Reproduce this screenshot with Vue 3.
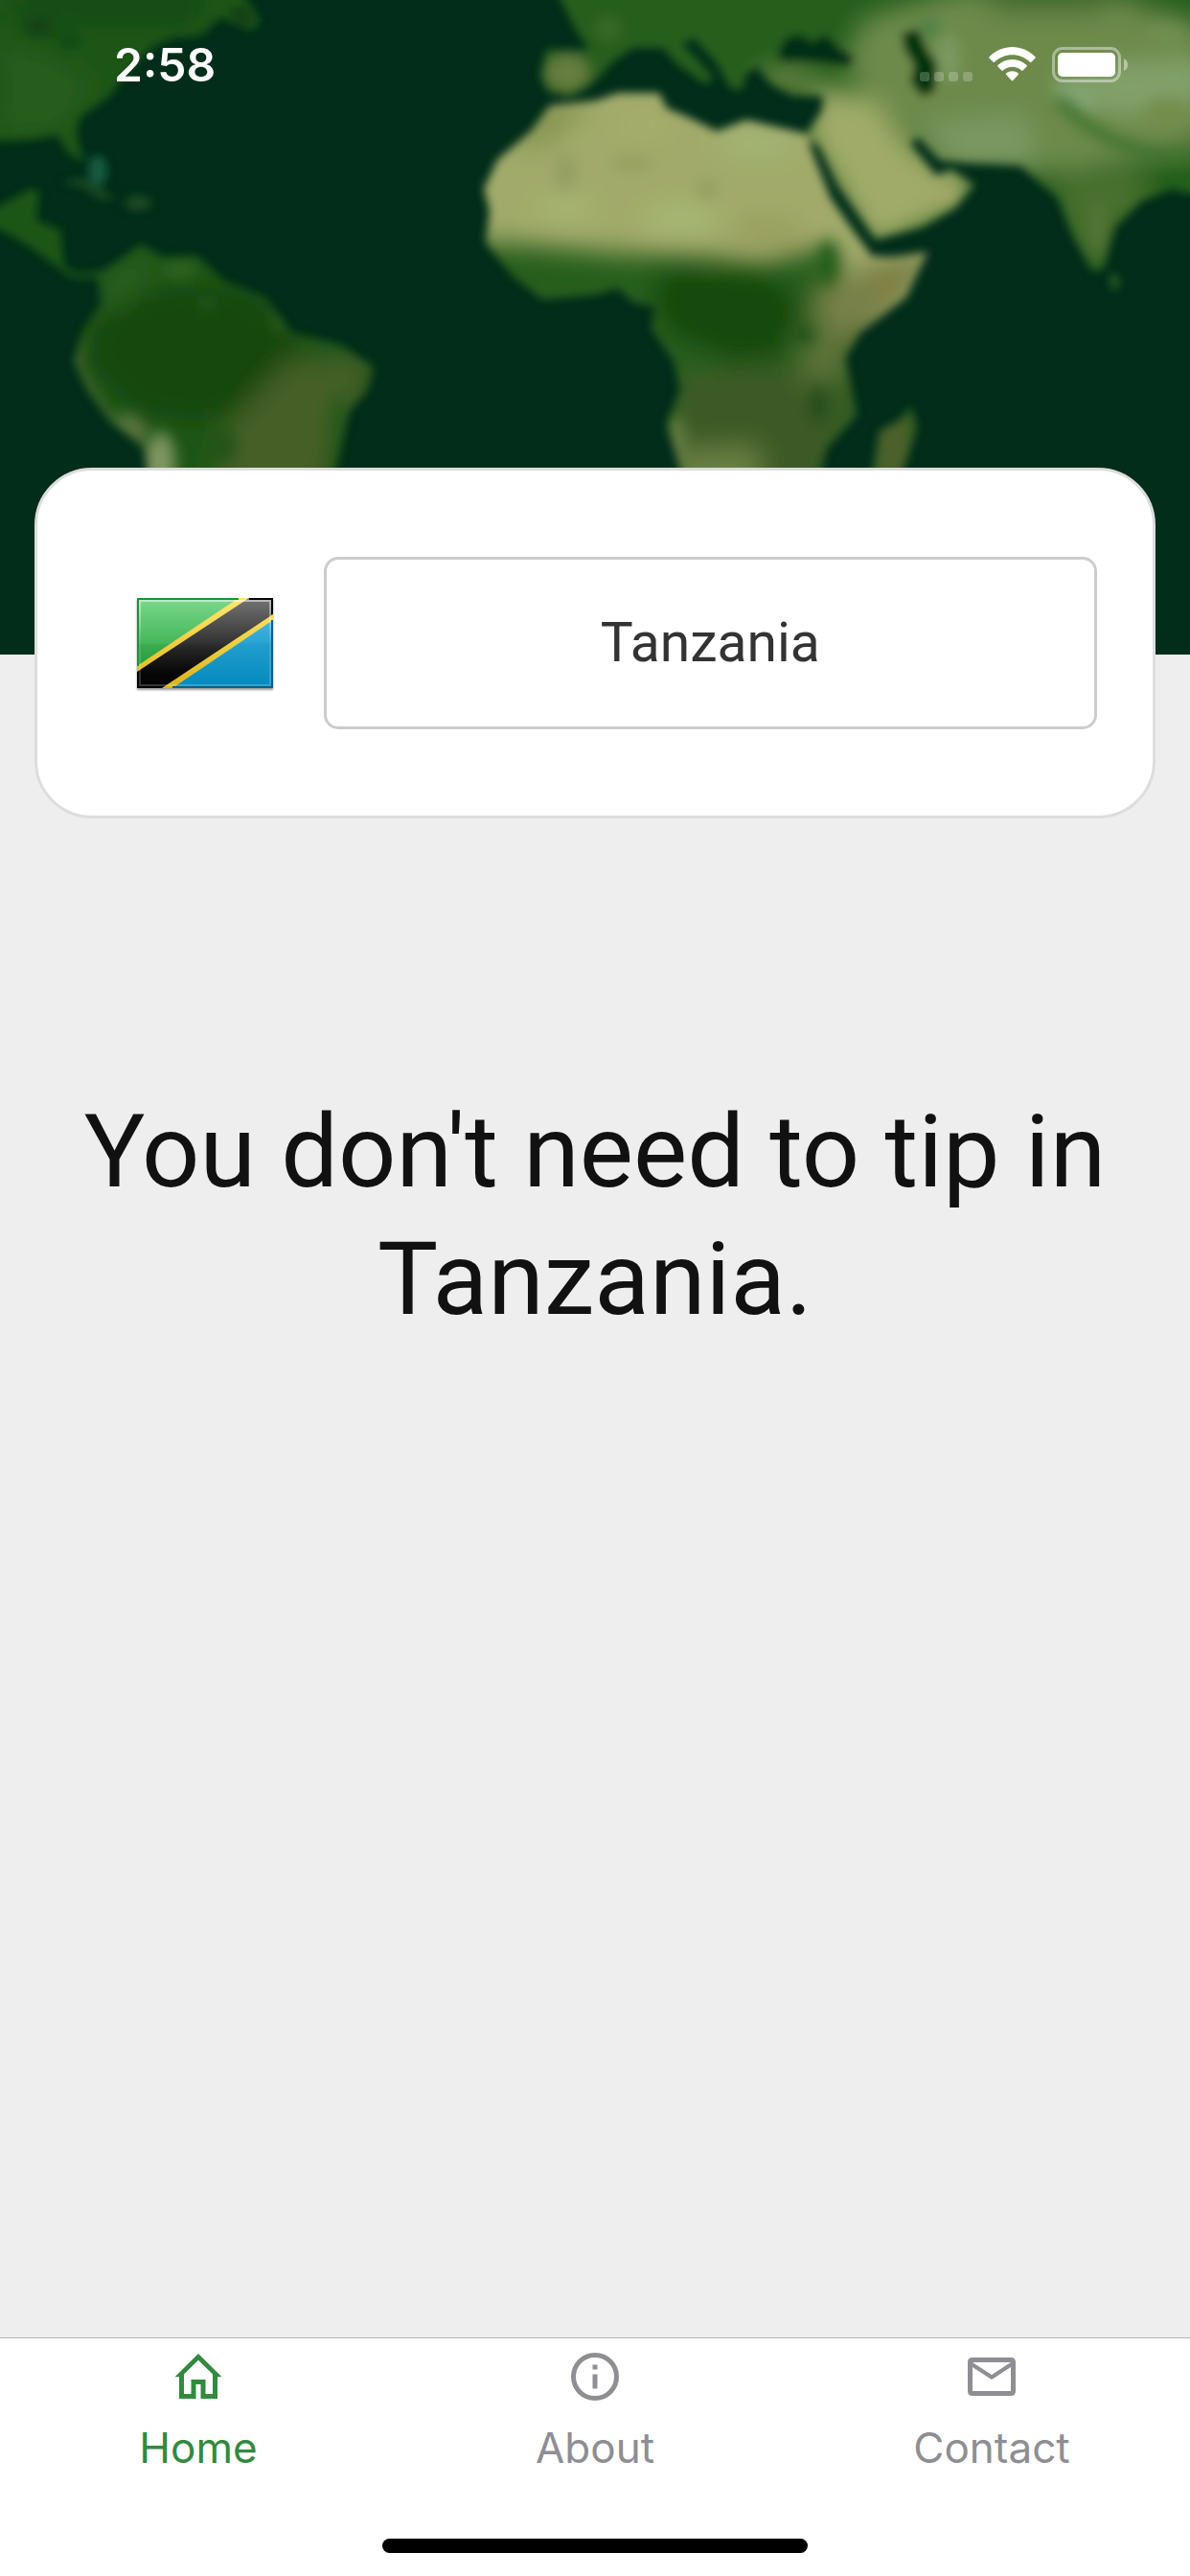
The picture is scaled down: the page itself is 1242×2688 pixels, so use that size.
<script setup>
import { ref } from 'vue'

const country = ref('Tanzania')
const active = ref('home')
const tabs = [
  { id: 'home', label: 'Home' },
  { id: 'about', label: 'About' },
  { id: 'contact', label: 'Contact' }
]
</script>

<template>
  <div class="screen">
    <header class="hero">
      <svg class="map" viewBox="0 0 1242 683" preserveAspectRatio="xMidYMin slice" aria-hidden="true">
        <defs>
          <filter id="soft" x="-5%" y="-5%" width="110%" height="110%"><feGaussianBlur stdDeviation="5" /></filter>
          <filter id="wide" x="-50%" y="-50%" width="200%" height="200%"><feGaussianBlur stdDeviation="13" /></filter>
          <filter id="patch" x="-50%" y="-50%" width="200%" height="200%"><feGaussianBlur stdDeviation="6" /></filter>
          <clipPath id="americas">
            <path d="M-20-20H245L272 22 262 32 230 18 210 38 180 40 158 50 132 76 115 100 83 123 80 140 88 170 71 160 60 141 30 146-20 148Z" />
            <path d="M-10 220 32 197 41 200 38 230 63 240 67 277 79 285 107 283 147 255 170 268 206 267 234 293 277 310 305 347 356 360 390 383 384 407 364 430 356 467 345 510H156L150 467 115 440 91 407 77 377 87 343 105 317 102 290 75 290 44 267 20 250-10 235Z" />
          </clipPath>
          <clipPath id="africa">
            <path d="M622 105 574 110 554 137 519 167 505 197 511 220 507 253 535 287 566 312 622 307 645 300 661 315 684 320 680 343 704 377 710 407 696 443 716 510H852L863 467 894 433 882 373 898 347 946 310 968 263 930 268 910 267 890 240 867 207 847 157 843 140 779 125 748 137 720 123 696 113 688 97 645 97Z" />
            <path d="M950 425 957 445 946 480 935 510H908L918 450 940 438Z" />
          </clipPath>
          <clipPath id="eurasia">
            <path d="M575-20 602 33 615 52 570 52 564 80 572 96 594 101 612 92 626 80 640 64 661 50 692 50 706 66 736 88 745 82 728 62 712 46 724 40 748 66 762 92 775 94 778 78 790 70 805 88 827 100 859 100 858 115 840 142 855 153 874 193 914 250 962 237 997 217 1017 193 993 177 977 183 950 150 958 143 981 167 1009 170 1065 173 1104 207 1120 247 1140 283 1152 280 1164 237 1191 210 1223 197 1262 207V-20Z" />
            <path d="M1160 284 1169 290 1166 304 1158 298Z" />
          </clipPath>
        </defs>
        <rect width="1242" height="683" fill="#012d1a" />
        <g filter="url(#soft)">
          <g clip-path="url(#americas)">
            <rect x="-20" y="-20" width="420" height="540" fill="#1e5617" />
            <g filter="url(#wide)">
              <path d="M0-20H220L210 30 90 30 0 10Z" fill="#174d12" />
              <path d="M0 40 60 60 100 90 60 140 0 140Z" fill="#265c1c" />
              <path d="M170 300 260 300 320 360 290 400 270 430 200 440 140 430 90 380 100 330Z" fill="#13460f" />
              <path d="M300 375 390 370 370 430 330 520 225 520 230 450Z" fill="#445e28" />
              <path d="M120 280 170 265 130 320 105 330Z" fill="#2a5f20" />
            </g>
            <g filter="url(#patch)">
              <path d="M80 350 76 380 104 430 150 470 152 510" fill="none" stroke="#4c6a34" stroke-width="12" />
              <ellipse cx="168" cy="485" rx="14" ry="34" fill="#7f9860" />
              <ellipse cx="140" cy="444" rx="18" ry="8" fill="#5d7840" transform="rotate(38 140 444)" />
              <ellipse cx="188" cy="282" rx="18" ry="9" fill="#306323" />
              <ellipse cx="216" cy="318" rx="9" ry="8" fill="#1f5819" />
              <ellipse cx="291" cy="336" rx="6" ry="11" fill="#335d1f" />
              <ellipse cx="232" cy="465" rx="14" ry="16" fill="#215319" />
              <ellipse cx="352" cy="450" rx="10" ry="40" fill="#265a1c" />
              <ellipse cx="40" cy="28" rx="16" ry="9" fill="#0e3b12" />
              <ellipse cx="72" cy="43" rx="10" ry="7" fill="#0e4213" />
            </g>
          </g>
          <path d="M236 8 256 6 266 24 250 26Z" fill="#163f18" />
          <ellipse cx="102" cy="178" rx="10" ry="16" fill="#145a40" />
          <path d="M62 190 86 186 104 196 122 208 104 208 88 196Z" fill="#1a4a20" />
          <ellipse cx="144" cy="212" rx="14" ry="8" fill="#1d4a20" />

          <g clip-path="url(#africa)">
            <rect x="500" y="90" width="480" height="430" fill="#a1aa6a" />
            <g filter="url(#wide)">
              <path d="M440 250 560 256 640 264 720 266 800 274 836 262 870 262 876 300 890 330 990 380 990 560H440Z" fill="#265f1d" />
              <path d="M690 280 800 282 840 320 820 370 770 380 700 350 680 320Z" fill="#134a10" />
              <path d="M710 390 860 380 890 420 840 520 690 520Z" fill="#3c5a26" />
              <path d="M700 470 790 465 800 530 700 530Z" fill="#697f42" />
              <path d="M835 345 885 330 885 390 840 405Z" fill="#5b7237" />
              <path d="M870 290 950 265 980 265 930 330 880 355 845 320Z" fill="#788148" />
              <path d="M560 110 620 105 570 150 540 160Z" fill="#83934f" />
              <ellipse cx="590" cy="216" rx="30" ry="12" fill="#a8b773" />
              <ellipse cx="710" cy="228" rx="40" ry="13" fill="#a8bb77" />
              <ellipse cx="790" cy="150" rx="45" ry="14" fill="#a2b575" />
              <ellipse cx="670" cy="130" rx="34" ry="14" fill="#a6ae68" />
              <ellipse cx="800" cy="240" rx="36" ry="12" fill="#969d5c" />
            </g>
            <g filter="url(#patch)">
              <ellipse cx="590" cy="180" rx="12" ry="20" fill="#949f63" />
              <ellipse cx="660" cy="170" rx="22" ry="8" fill="#979f60" />
              <ellipse cx="738" cy="198" rx="10" ry="9" fill="#929c5d" />
              <ellipse cx="864" cy="274" rx="13" ry="24" fill="#265e1c" />
              <ellipse cx="926" cy="296" rx="10" ry="12" fill="#84813f" />
              <ellipse cx="840" cy="350" rx="11" ry="9" fill="#1d4f18" />
              <ellipse cx="854" cy="422" rx="11" ry="20" fill="#264f1b" />
              <ellipse cx="706" cy="460" rx="10" ry="26" fill="#627b43" />
              <ellipse cx="932" cy="470" rx="20" ry="50" fill="#4b602b" />
            </g>
          </g>

          <g clip-path="url(#eurasia)">
            <rect x="540" y="-20" width="730" height="340" fill="#265e1d" />
            <g filter="url(#wide)">
              <path d="M900 20 1000-10 1180 0 1262 30 1262 150 1120 180 1000 180 940 130 880 70Z" fill="#6d8a4b" />
              <path d="M850 90 910 100 950 150 990 180 1020 190 1000 220 910 260 870 190 840 140Z" fill="#a0ab69" />
              <path d="M960 130 1070 120 1080 175 1000 175Z" fill="#7b9863" />
              <path d="M1110 70 1262 60 1262 110 1180 120 1120 110Z" fill="#83a16a" />
              <path d="M1100 190 1190 175 1200 215 1160 240 1150 290 1120 250Z" fill="#48702e" />
              <path d="M1200 165 1262 160V220H1200Z" fill="#22601a" />
              <path d="M1020-20 1160-20 1150 12 1040 12Z" fill="#42682d" />
              <path d="M1170-20H1230L1200 20Z" fill="#215b1a" />
              <ellipse cx="820" cy="82" rx="34" ry="11" fill="#72894a" />
            </g>
            <g filter="url(#patch)">
              <ellipse cx="592" cy="76" rx="24" ry="20" fill="#687d41" />
              <path d="M1104 102 1128 126 1160 146 1200 160 1262 166" fill="none" stroke="#41732f" stroke-width="13" />
              <path d="M1102 90 1130 100 1140 112" fill="none" stroke="#82a978" stroke-width="12" />
              <ellipse cx="1216" cy="36" rx="24" ry="12" fill="#6f8e50" />
              <ellipse cx="1218" cy="118" rx="24" ry="16" fill="#738d4c" />
              <ellipse cx="990" cy="60" rx="12" ry="24" fill="#7b9a60" />
              <ellipse cx="970" cy="30" rx="8" ry="8" fill="#3a793f" />
              <ellipse cx="1146" cy="238" rx="6" ry="28" fill="#59783a" />
              <ellipse cx="984" cy="202" rx="16" ry="8" fill="#a4a867" />
              <ellipse cx="635" cy="30" rx="14" ry="14" fill="#3a6825" />
            </g>
          </g>
          <path d="M822 38 838 36 846 44 862 36 876 50 892 60 886 70 862 66 836 64 814 64 812 54Z" fill="#022f17" />
          <path d="M941 34 958 30 968 52 978 66 976 96 962 101 950 86 954 68 944 52Z" fill="#053611" />
        </g>
      </svg>

      <div class="status">
        <time class="clock">2:58</time>
        <div class="signals">
          <svg width="55" height="36" viewBox="0 0 55 36" role="img" aria-label="No cellular signal">
            <g fill="#fff" opacity=".22">
              <rect y="26" width="10" height="10" rx="3" /><rect x="15" y="26" width="10" height="10" rx="3" />
              <rect x="30" y="26" width="10" height="10" rx="3" /><rect x="45" y="26" width="10" height="10" rx="3" />
            </g>
          </svg>
          <svg width="49" height="36" viewBox="0 0 49 36" role="img" aria-label="Wi-Fi">
            <g fill="#fff">
              <path d="M.6 10.2Q-.2 11 .6 11.8L4.6 15.7Q5.300 16.300 6 15.700C16.300 5.700 32.700 5.700 43 15.700Q43.700 16.300 44.400 15.700L48.400 11.800Q49.200 11 48.400 10.200C34.800-3.400 14.200-3.400.6 10.200Z" />
              <path d="M9.400 19Q8.700 19.700 9.400 20.400L13.500 24.500Q14.200 25.100 14.900 24.500C20.300 19.500 28.700 19.500 34.100 24.500Q34.800 25.100 35.500 24.500L39.600 20.400Q40.300 19.700 39.600 19C31.200 11 17.800 11 9.400 19Z" />
              <path d="M18.200 27.600Q17.500 28.400 18.200 29.100L23.800 35Q24.500 35.700 25.200 35L30.800 29.100Q31.500 28.400 30.800 27.600C27.200 24.600 21.800 24.600 18.200 27.600Z" />
            </g>
          </svg>
          <svg width="79" height="37" viewBox="0 0 79 37" role="img" aria-label="Battery full">
            <rect x="1.500" y="1.500" width="69" height="34" rx="9.500" fill="none" stroke="#fff" stroke-width="3" opacity=".42" />
            <path d="M75 12Q79 14 79 18.500 79 23 75 25Z" fill="#fff" opacity=".45" />
            <rect x="6" y="6" width="60" height="25" rx="5" fill="#fff" />
          </svg>
        </div>
      </div>
    </header>

    <main class="content">
      <section class="card">
        <div class="flag-cell">
          <svg class="flag" width="142" height="94" viewBox="0 0 142 94" role="img" aria-label="Flag of Tanzania">
            <defs>
              <linearGradient id="gr" x2="0" y2="1"><stop offset="0" stop-color="#7bd88d" /><stop offset=".5" stop-color="#45b75a" /><stop offset=".52" stop-color="#3bab4f" /><stop offset=".8" stop-color="#229a3a" /></linearGradient>
              <linearGradient id="bl" x2="0" y2="1"><stop offset=".15" stop-color="#4dbbe5" /><stop offset=".49" stop-color="#2ba4d5" /><stop offset=".52" stop-color="#219dcd" /><stop offset="1" stop-color="#0389bd" /></linearGradient>
              <linearGradient id="bk" x2="0" y2="1"><stop offset="0" stop-color="#757575" /><stop offset=".49" stop-color="#343434" /><stop offset=".55" stop-color="#262626" /><stop offset=".85" stop-color="#050505" /></linearGradient>
              <linearGradient id="ye" x2="0" y2="1"><stop offset="0" stop-color="#ffe772" /><stop offset=".5" stop-color="#efcf42" /><stop offset="1" stop-color="#dbb31c" /></linearGradient>
              <linearGradient id="shine" x2="0" y2="1"><stop offset="0" stop-color="#fff" stop-opacity=".5" /><stop offset=".5" stop-color="#fff" stop-opacity=".1" /><stop offset="1" stop-color="#fff" stop-opacity=".2" /></linearGradient>
            </defs>
            <rect width="142" height="94" fill="url(#gr)" />
            <path d="M142 0V94H0Z" fill="url(#bl)" />
            <path d="M106 0H142V23L37 94H0V71Z" fill="url(#ye)" />
            <path d="M117 0H142V17L26 94H0V77Z" fill="url(#bk)" />
            <rect x="3" y="3" width="136" height="88" fill="none" stroke="url(#shine)" stroke-width="2" />
            <path d="M1 71V1H106" fill="none" stroke="#1f9137" stroke-width="2" />
            <path d="M117 1H141V17M1 77V93H26" fill="none" stroke="#050505" stroke-width="2" />
            <path d="M141 23V93H37" fill="none" stroke="#0a6286" stroke-width="2" />
          </svg>
        </div>
        <button type="button" class="picker" aria-haspopup="listbox">{{ country }}</button>
      </section>

      <p class="advice">You don't need to tip in {{ country }}.</p>
    </main>

    <footer class="bar">
      <nav class="tabs">
        <a v-for="tab in tabs" :key="tab.id" :href="'#' + tab.id" class="tab" :class="{ active: active === tab.id }" @click="active = tab.id">
          <svg class="icon" viewBox="0 0 60 60" aria-hidden="true">
            <path v-if="tab.id === 'home'" fill="currentColor" fill-rule="evenodd" d="M30 6 54.500 30.300H50V53H32.500V38H27.500V53H10V30.300H5.500ZM30 12.700 15 27.600V48H22.500V33H37.500V48H45V27.600Z" />
            <g v-else-if="tab.id === 'about'">
              <circle cx="30" cy="30" r="22.500" fill="none" stroke="currentColor" stroke-width="5" />
              <path fill="currentColor" d="M27.500 17.500h5v5h-5zM27.500 27.500h5v15h-5z" />
            </g>
            <path v-else fill="currentColor" fill-rule="evenodd" d="M10 10H50Q55 10 55 15V45Q55 50 50 50H10Q5 50 5 45V15Q5 10 10 10ZM10 20V45H50V20L30 33ZM10 15 30 28 50 15Z" />
          </svg>
          <span>{{ tab.label }}</span>
        </a>
      </nav>
      <div class="indicator"></div>
    </footer>
  </div>
</template>

<style>
body {
  margin: 0;
}
</style>

<style scoped>
.screen {
  display: flex;
  flex-direction: column;
  min-height: 100vh;
  background: #eee;
  font-family: Inter, "Liberation Sans", sans-serif;
}

.hero {
  position: relative;
  height: 683px;
  background: #012d1a;
}

.map {
  position: absolute;
  inset: 0;
  width: 100%;
  height: 100%;
}

.status {
  position: relative;
  display: flex;
  justify-content: space-between;
  align-items: center;
  height: 135px;
  padding: 0 65px 0 119px;
  color: #fff;
}

.clock {
  font-size: 48px;
  line-height: 56px;
  font-weight: 600;
}

.signals {
  display: flex;
  align-items: flex-start;
  gap: 17px;
}

.content {
  position: relative;
  flex: 1;
  margin-top: -195px;
}

.card {
  display: flex;
  align-items: center;
  box-sizing: border-box;
  margin: 0 36px;
  padding: 90px 58px 90px 0;
  border: 3px solid #ddd;
  border-radius: 60px;
  background: #fff;
}

.flag-cell {
  flex: 1;
  display: flex;
  justify-content: center;
  padding-left: 52px;
}

.flag {
  display: block;
  filter: drop-shadow(0 2px 1px rgba(0, 0, 0, .4));
}

.picker {
  flex: 0 0 73%;
  height: 180px;
  box-sizing: border-box;
  padding: 0;
  border: 3px solid #ccc;
  border-radius: 15px;
  background: #fff;
  color: #333;
  font-family: Roboto, "Liberation Sans", sans-serif;
  font-size: 57px;
  line-height: 72px;
}

.advice {
  margin: 282px 60px 0;
  color: #111;
  font-family: Roboto, "Liberation Sans", sans-serif;
  font-size: 106px;
  line-height: 133px;
  text-align: center;
}

.bar {
  display: flex;
  flex-direction: column;
  align-items: center;
  justify-content: space-between;
  box-sizing: border-box;
  height: 249px;
  padding: 10px 0 24px;
  border-top: 1px solid #b2b2b2;
  background: #fff;
}

.tabs {
  display: flex;
  width: 100%;
}

.tab {
  flex: 1;
  display: flex;
  flex-direction: column;
  align-items: center;
  gap: 20px;
  color: #8e8e93;
  font-size: 44px;
  line-height: 48px;
  text-decoration: none;
}

.tab.active {
  color: #328a3d;
}

.icon {
  width: 60px;
  height: 60px;
}

.indicator {
  width: 444px;
  height: 15px;
  border-radius: 8px;
  background: #000;
}
</style>
